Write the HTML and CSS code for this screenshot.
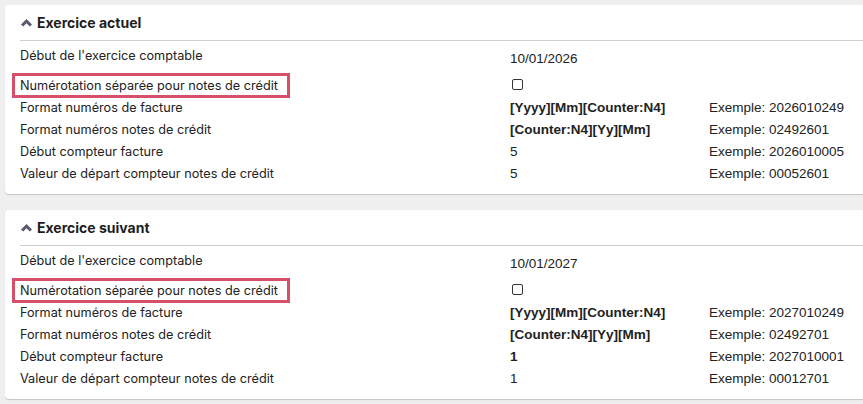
FILE: index.html
```html
<!DOCTYPE html>
<html lang="fr">
<head>
    <meta charset="UTF-8">
    <meta name="viewport" content="width=device-width, initial-scale=1.0">
    <title>Exercices comptables</title>
    <link rel="stylesheet" href="styles.css">
</head>
<body>
    <section class="card">
        <header class="card-head">
            <svg class="chevron" viewBox="0 0 11 8" width="11" height="8"><path d="M5.5 0 L11 5.4 L8.8 7.6 L5.5 4.3 L2.2 7.6 L0 5.4 Z"/></svg>
            <h2>Exercice actuel</h2>
        </header>
        <div class="rows">
            <div class="row first">
                <span class="label">Début de l'exercice comptable</span>
                <span class="value">10/01/2026</span>
                <span class="example"></span>
            </div>
            <div class="row">
                <span class="label"><span class="marked">Numérotation séparée pour notes de crédit</span></span>
                <span class="value"><input type="checkbox" class="check"></span>
                <span class="example"></span>
            </div>
            <div class="row">
                <span class="label">Format numéros de facture</span>
                <span class="value strong">[Yyyy][Mm][Counter:N4]</span>
                <span class="example">Exemple: 2026010249</span>
            </div>
            <div class="row">
                <span class="label">Format numéros notes de crédit</span>
                <span class="value strong">[Counter:N4][Yy][Mm]</span>
                <span class="example">Exemple: 02492601</span>
            </div>
            <div class="row">
                <span class="label">Début compteur facture</span>
                <span class="value">5</span>
                <span class="example">Exemple: 2026010005</span>
            </div>
            <div class="row">
                <span class="label">Valeur de départ compteur notes de crédit</span>
                <span class="value">5</span>
                <span class="example">Exemple: 00052601</span>
            </div>
        </div>
    </section>

    <section class="card">
        <header class="card-head">
            <svg class="chevron" viewBox="0 0 11 8" width="11" height="8"><path d="M5.5 0 L11 5.4 L8.8 7.6 L5.5 4.3 L2.2 7.6 L0 5.4 Z"/></svg>
            <h2>Exercice suivant</h2>
        </header>
        <div class="rows">
            <div class="row first">
                <span class="label">Début de l'exercice comptable</span>
                <span class="value">10/01/2027</span>
                <span class="example"></span>
            </div>
            <div class="row">
                <span class="label"><span class="marked">Numérotation séparée pour notes de crédit</span></span>
                <span class="value"><input type="checkbox" class="check"></span>
                <span class="example"></span>
            </div>
            <div class="row">
                <span class="label">Format numéros de facture</span>
                <span class="value strong">[Yyyy][Mm][Counter:N4]</span>
                <span class="example">Exemple: 2027010249</span>
            </div>
            <div class="row">
                <span class="label">Format numéros notes de crédit</span>
                <span class="value strong">[Counter:N4][Yy][Mm]</span>
                <span class="example">Exemple: 02492701</span>
            </div>
            <div class="row">
                <span class="label">Début compteur facture</span>
                <span class="value strong">1</span>
                <span class="example">Exemple: 2027010001</span>
            </div>
            <div class="row">
                <span class="label">Valeur de départ compteur notes de crédit</span>
                <span class="value">1</span>
                <span class="example">Exemple: 00012701</span>
            </div>
        </div>
    </section>
</body>
</html>
```

FILE: styles.css
```css
/* general */
body {
    margin: 0;
    padding: 5px 0 0 5px;
    background: #efefef;
    font-family: Inter, "Noto Sans", sans-serif;
    font-size: 12.7px;
    color: #222;
    overflow: hidden;
}

.card {
    width: 880px;
    background: #fff;
    border-radius: 4px;
    box-shadow: 0 1px 1px rgba(0, 0, 0, 0.18);
    padding: 0 0 10px 15px;
    margin-bottom: 16px;
    box-sizing: border-box;
}

.card-head {
    display: flex;
    align-items: center;
    gap: 5px;
    height: 36px;
    padding-left: 1px;
    padding-bottom: 1px;
    border-bottom: 1px solid #cfcfcf;
    box-sizing: border-box;
}

.card-head h2 {
    margin: 0;
    font-size: 14px;
    font-weight: 700;
    color: #1e1e1e;
}

.chevron {
    flex: none;
    display: block;
    width: 11px;
    height: 8px;
    fill: #5d566f;
    margin-top: 1px;
}

.rows {
    padding-top: 4px;
}

.row {
    display: grid;
    grid-template-columns: 490px 199px 1fr;
    height: 22px;
    align-items: center;
}

.row.first {
    height: 29px;
    align-items: start;
}

.row.first .label {
    line-height: 22px;
}

.row.first .value {
    padding-top: 3px;
    line-height: 22px;
}

.value,
.example {
    font-family: "Liberation Sans", Arial, sans-serif;
    font-size: 13.5px;
    color: #222;
}

.strong {
    font-weight: 700;
}

.marked {
    display: inline-block;
    margin-left: -5px;
    padding: 0 9px 0 5px;
    line-height: 19px;
    outline: 3px solid #d6506b;
}

.check {
    appearance: none;
    width: 9px;
    height: 9px;
    margin: 2px 0 0 2px;
    border: 1px solid #333;
    border-radius: 2px;
    background: #fff;
    box-sizing: content-box;
}
```
